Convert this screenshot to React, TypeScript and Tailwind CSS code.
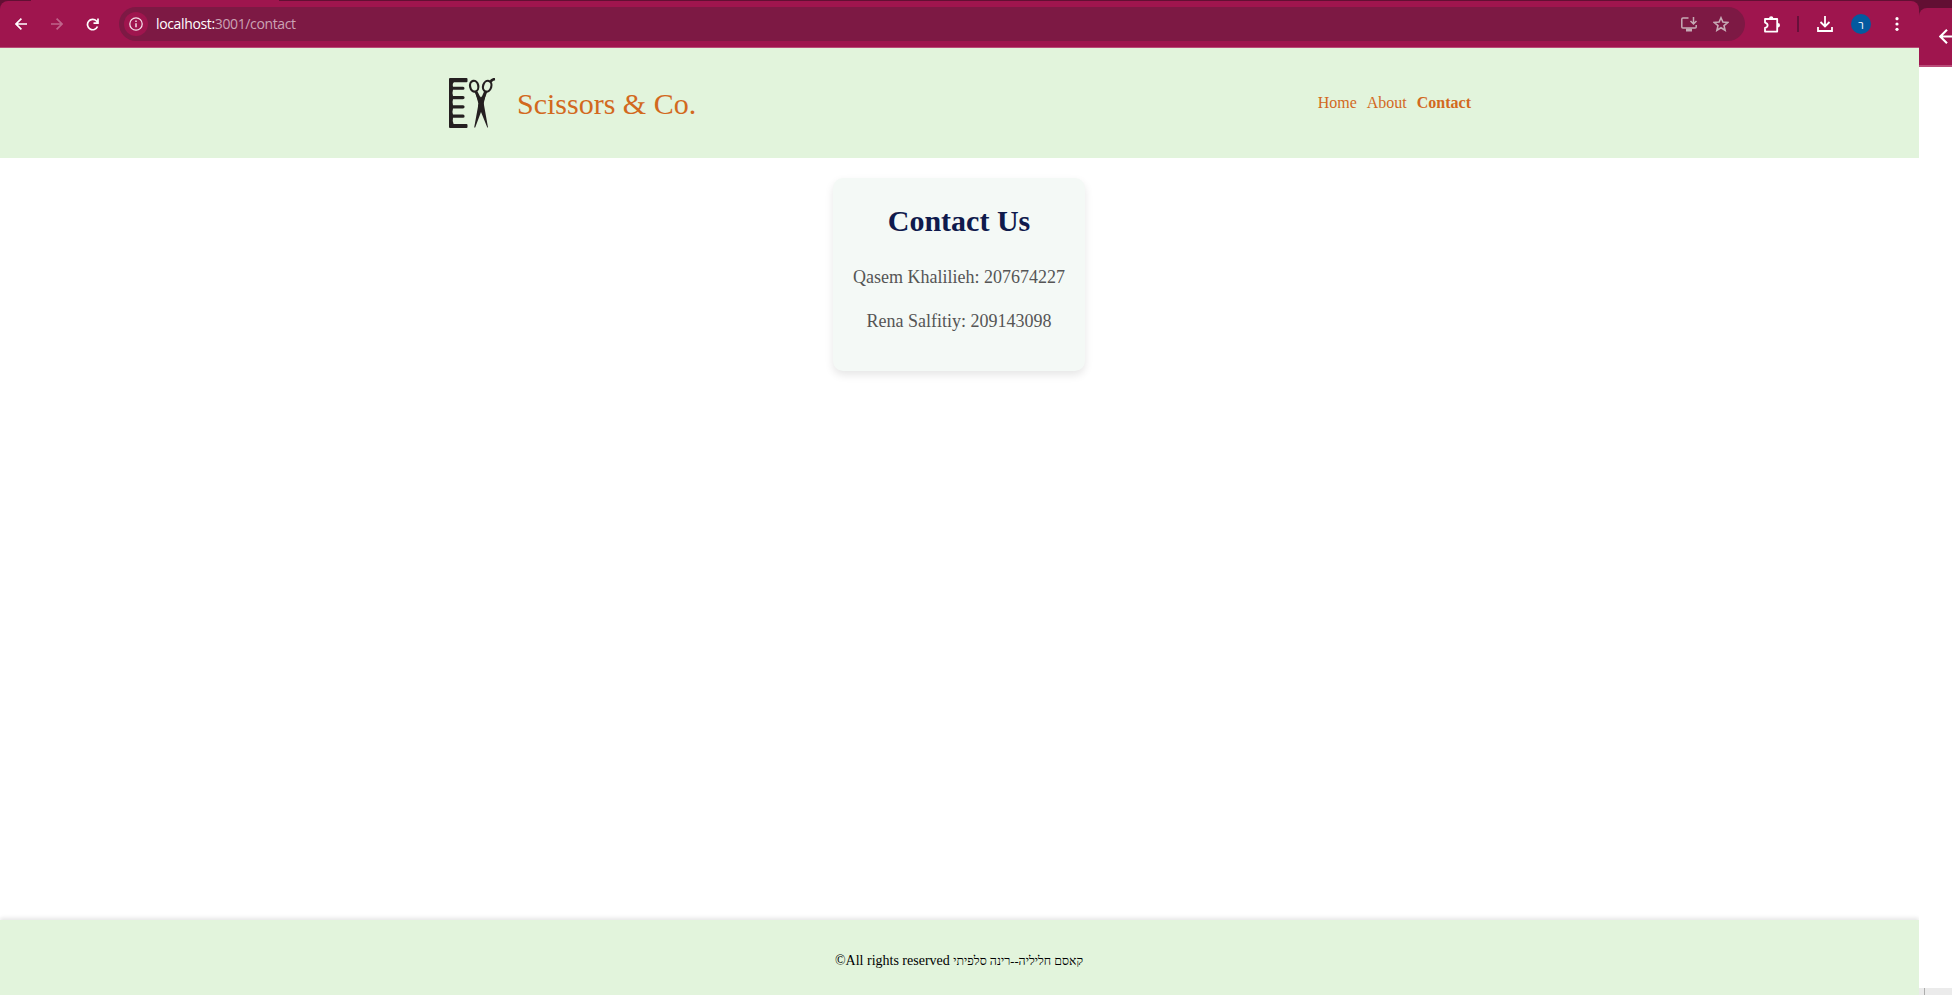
import React from "react";

const BackIcon = ({ className }: { className: string }) => (
  <svg viewBox="0 0 12 12" className={className} fill="none" stroke="currentColor" strokeWidth="1.7">
    <path d="M12 6H1M6.4.6 1 6l5.4 5.4" />
  </svg>
);

const Logo = () => (
  <svg viewBox="0 0 48 52" className="mt-[2px] h-[52px] w-[48px] shrink-0" fill="#241f20">
    <path d="M2 0h16.500a1 1 0 0 1 1 1v2.200a1 1 0 0 1-1 1H6q-1.800 1-1 4.600H15a1.200 1.200 0 0 1 0 3H5q-1 3 0 6.200h10a1.300 1.300 0 0 1 0 3.200H5q-1 3 0 6h10a1.300 1.300 0 0 1 0 3.200H5q-1 3 0 6.200h10a1.300 1.300 0 0 1 0 3.200H5q-.8 3.400.6 6.200h12.900a1 1 0 0 1 1 1V49a1 1 0 0 1-1 1H2a1 1 0 0 1-1-1V1a1 1 0 0 1 1-1Z" />
    <g fill="none" stroke="#241f20">
      <ellipse cx="26.200" cy="8.200" rx="4.100" ry="5.500" transform="rotate(-12 26.200 8.200)" strokeWidth="2.200" />
      <ellipse cx="39.200" cy="8.200" rx="4.100" ry="5.500" transform="rotate(18 39.200 8.200)" strokeWidth="2.200" />
      <path d="M42.500 4q1-2.600 4.500-3" strokeWidth="2.600" />
    </g>
    <path d="M26.500 13.500 29.500 13.500 33 20.500 36.200 13.200 39.200 14 36.300 21.500Q35.200 24 36 27L40 49.500H39.300L33 34 27.200 49.500H26.200L30 28.500Q31 24.500 29.800 21.500ZM33 18 35 23V30L33 33 31 30V23Z" />
    <path d="m27 13.500 9 13.500-3 6-3-9ZM38.500 13.500 30 27l3 6 3-9Z" />
  </svg>
);

const Toolbar = () => (
  <div className="flex h-[47px] items-center border-b border-[#b94c78] bg-[#9f154e] font-['Open_Sans',sans-serif] text-white">
    <BackIcon className="ml-[15px] h-[12px] w-[12px]" />
    <BackIcon className="ml-[24px] h-[12px] w-[12px] rotate-180 text-[#c0648b]" />
    <svg viewBox="0 0 13 13" className="ml-[23px] h-[13px] w-[13px]" fill="none" stroke="currentColor" strokeWidth="1.700">
      <path d="M11.500 8.500A5.200 5.200 0 1 1 10.500 3L11.700 4.400M12 .5v4.600H7.500" />
    </svg>
    <div className="ml-[20px] flex h-[34px] w-[1626px] items-center rounded-full bg-[#7d1944] pl-[5px] pr-[16px]">
      <div className="flex size-6 items-center justify-center rounded-full bg-[#9f154e]">
        <svg viewBox="0 0 14 14" className="size-[14px] text-[#f3dfe8]" fill="none" stroke="currentColor" strokeWidth="1.300">
          <circle cx="7" cy="7" r="6.200" />
          <path d="M7 6.200v4M7 3.500v1.500" strokeWidth="1.500" />
        </svg>
      </div>
      <span className="ml-[8px] text-[14px] leading-none tracking-[-0.36px] text-[#cba3b4]">
        <span className="text-white">localhost:</span>3001/contact
      </span>
      <svg viewBox="0 0 16 15" className="ml-auto h-[15px] w-[16px] text-[#c6aab5]" fill="none" stroke="currentColor" strokeWidth="1.500">
        <path d="M7.500 1H2Q.8 1 .8 2v8q0 1 1 1h12.400q1 0 1-1V8M12.500 0v6.500M9.500 4l3 3 3-3" />
        <path d="M5 13h6" strokeWidth="3" />
      </svg>
      <svg viewBox="0 0 16 16" className="ml-[16px] size-[16px] text-[#c6aab5]" fill="none" stroke="currentColor" strokeWidth="1.600">
        <path d="m8 1.800 1.900 4.300 4.800.4L11 9.600l1.100 4.600L8 11.700l-4.100 2.500L5 9.600 1.300 6.500l4.800-.4Z" />
      </svg>
    </div>
    <svg viewBox="0 0 17 17" className="ml-[19px] size-[17px]">
      <path
        d="M1 3h12.200v12.600H1V12q2.600-.5 2.600-2.700T1 6.600Z"
        fill="none"
        stroke="currentColor"
        strokeWidth="1.800"
        strokeLinejoin="round"
      />
      <path d="M5 2.500a2.200 2.200 0 0 1 4.400 0ZM13.800 7a2.200 2.200 0 0 1 0 4.400Z" fill="currentColor" />
    </svg>
    <div className="ml-[16px] h-4 w-[2px] bg-[#68103a]" />
    <svg viewBox="0 0 16 16" className="ml-[18px] size-4" fill="none" stroke="currentColor" strokeWidth="1.800">
      <path d="M8 0v10M3.500 6 8 10.500 12.500 6M1 11v4h14v-4" />
    </svg>
    <div className="ml-[18px] flex size-5 items-center justify-center rounded-full bg-[#045a9f] text-[11px] leading-none">ר</div>
    <svg viewBox="0 0 4 14" className="ml-[24px] h-[14px] w-[4px]" fill="currentColor">
      <circle cx="2" cy="1.700" r="1.600" />
      <circle cx="2" cy="7" r="1.600" />
      <circle cx="2" cy="12.300" r="1.600" />
    </svg>
  </div>
);

export default function App() {
  return (
    <div className="flex h-[995px] w-[1952px] overflow-hidden bg-white font-['Liberation_Serif',serif]">
      <div className="flex w-[1919px] shrink-0 flex-col">
        <div className="bg-[#620f33]">
          <div className="ml-[31px] h-px w-[248px] bg-[#9f154e]" />
          <div className="overflow-hidden rounded-t-[8px]">
            <Toolbar />
          </div>
        </div>
        <header className="flex h-[110px] shrink-0 items-center justify-between bg-[#e2f4dc] pl-[448px] pr-[448px] text-[#d2691e]">
          <div className="flex items-center">
            <Logo />
            <span className="ml-[21px] mt-[2px] text-[30px] leading-none">Scissors &amp; Co.</span>
          </div>
          <nav className="flex gap-[10px] text-[16px] leading-none">
            <a>Home</a>
            <a>About</a>
            <a className="font-bold">Contact</a>
          </nav>
        </header>
        <main className="flex grow items-start justify-center pr-px pt-5">
          <section className="h-[193px] rounded-[10px] bg-[#f4f9f6] px-5 pt-5 text-center shadow-[0_4px_8px_rgba(0,0,0,0.1)]">
            <h1 className="text-[30px] font-bold leading-[46px] text-[#0f1a4c]">Contact Us</h1>
            <p className="mt-[20px] text-[18px] leading-[26px] text-[#555]">Qasem Khalilieh: 207674227</p>
            <p className="mt-[18px] text-[18px] leading-[26px] text-[#555]">Rena Salfitiy: 209143098</p>
          </section>
        </main>
        <footer className="flex h-[75px] shrink-0 items-center justify-center bg-[#e2f4dc] pr-px pt-[6px] text-[14px] leading-none text-black shadow-[0_-2px_4px_rgba(0,0,0,0.1)]">
          <p>
            ©All rights reserved <span className="text-[12.4px]">קאסם חליליה--רינה סלפיתי</span>
          </p>
        </footer>
      </div>
      <aside className="flex w-[33px] shrink-0 flex-col bg-[#620f33]">
        <div className="mt-2 flex h-[59px] shrink-0 items-center justify-end overflow-hidden rounded-tl-[8px] border-b-2 border-[#b94c78] bg-[#9f154e]">
          <BackIcon className="-mr-[2px] size-[15px] shrink-0 text-white" />
        </div>
        <div className="grow bg-white" />
        <div className="flex h-[7px] shrink-0 bg-[#ebebeb] pl-[5px]">
          <div className="w-px bg-[#adadad]" />
        </div>
      </aside>
    </div>
  );
}
